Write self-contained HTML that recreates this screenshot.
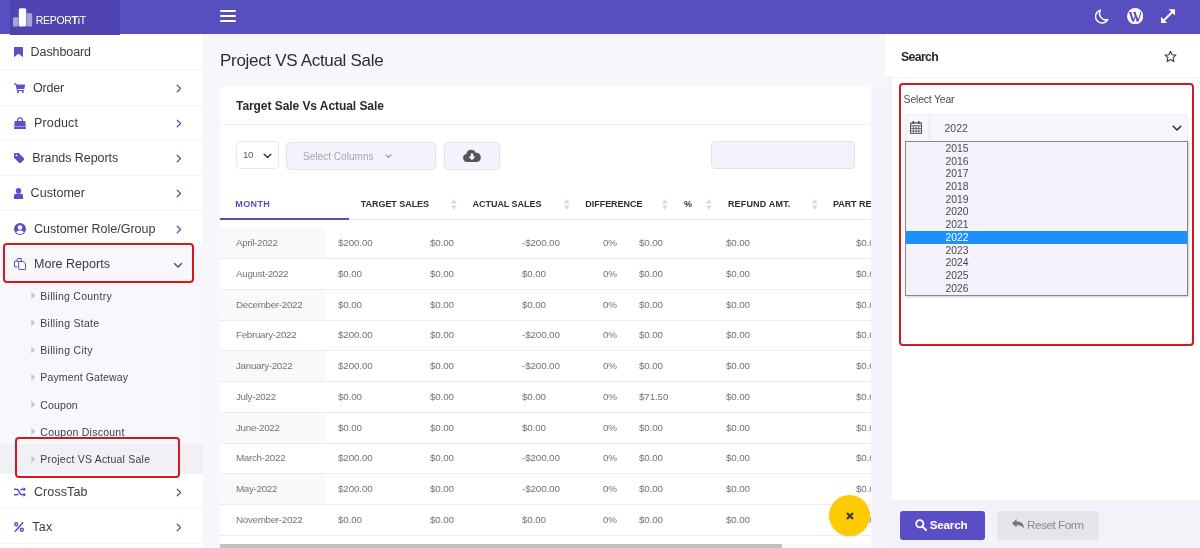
<!DOCTYPE html>
<html lang="en">
<head>
<meta charset="utf-8">
<title>Project VS Actual Sale</title>
<style>
*{box-sizing:border-box;margin:0;padding:0}
html,body{width:1200px;height:548px;overflow:hidden}
body{font-family:"Liberation Sans",sans-serif;background:#f8f6fd;color:#3a3a3c;position:relative;font-size:12px}
.abs{position:absolute}
#app{position:absolute;left:0;top:0;width:1200px;height:548px;overflow:hidden;will-change:transform}
#hdr{position:absolute;left:0;top:0;width:1200px;height:33.6px;background:#574ec0}
#logo{position:absolute;left:10px;top:0;width:110px;height:34.8px;background:#4f44b0;z-index:3}
#logo .txt{position:absolute;left:25.7px;top:12.7px;font-size:10.5px;line-height:14px;color:#fff;white-space:nowrap}
#burger{position:absolute;left:220px;top:10px;width:16px;height:12px}
#burger i{position:absolute;left:0;width:16px;height:2px;background:#fff;border-radius:1px}
#side{position:absolute;left:0;top:0;width:204px;height:548px}
#sidebg{position:absolute;left:0;top:33.6px;width:203.3px;height:515px;background:#fff}
.ln{position:absolute;left:0;width:203.3px;height:1px;background:#f3f2f6}
.mt{position:absolute;line-height:20px;font-size:12.5px;color:#3b3b3d;letter-spacing:.3px;white-space:nowrap}
svg.ic{position:absolute}
svg.ch{position:absolute;left:176px;width:6px;height:9px}
.st{position:absolute;left:40.3px;line-height:16px;font-size:10.5px;color:#3e3e40;letter-spacing:.5px;white-space:nowrap}
.tri{position:absolute;left:31.3px;width:4px;height:7.4px;background:#c8c8ce;clip-path:polygon(0 0,100% 50%,0 100%)}
.red{position:absolute;border:2px solid #d6181d;border-radius:4px}
#title{position:absolute;left:220px;top:49.7px;font-size:17px;line-height:22px;color:#2c2c30;white-space:nowrap}
#card{position:absolute;left:220px;top:87px;width:651px;height:470px;background:#fff;border-radius:5px 1px 0 0;overflow:hidden}
#card h3{position:absolute;left:16px;top:12px;font-size:12px;line-height:14px;font-weight:bold;color:#2a2a2e;letter-spacing:.6px;white-space:nowrap}
.box{position:absolute;border:1px solid #e3e2ec;border-radius:4px;background:#f4f3fc}
.th{position:absolute;top:108.8px;font-size:9px;line-height:16px;font-weight:bold;color:#2e2e32;letter-spacing:.75px;white-space:nowrap}
.th.on{color:#574ec0}
.so{position:absolute;top:111.6px;width:5.6px;height:11px}
.row{position:absolute;left:0;width:651px;height:31px;border-bottom:1px solid #ececf0;font-size:9.8px;letter-spacing:-.12px;color:#72737b;white-space:nowrap}
.row span{position:absolute;top:0;line-height:30px}
.row b{position:absolute;left:0;top:0;width:106px;height:30px;background:#f9f9fb;border-radius:3px}
#panel{position:absolute;left:886px;top:34px;width:314px;height:514px}
.yr{height:12.7px;line-height:13px;font-size:10.4px;color:#4a4a4e;padding-left:40px;white-space:nowrap}
.yr.sel{background:#1e8fff;color:#fff}
.btn{position:absolute;top:477.3px;height:28.5px;border-radius:3px;font-size:11.8px;line-height:28.6px;white-space:nowrap}
</style>
</head>
<body>
<div id="app">
<div id="hdr">
  <div id="logo">
    <svg class="abs" style="left:3px;top:7.5px" width="20" height="19" viewBox="0 0 20 19"><rect x="0" y="9.2" width="5.4" height="9.4" rx="1" fill="#a9a3da"/><rect x="13.6" y="5.2" width="5.6" height="13.4" rx="1" fill="#a9a3da"/><rect x="5.8" y="0.2" width="7.4" height="18.4" rx="1.5" fill="#fff"/></svg>
    <div class="txt" style="letter-spacing:-0.3px">REPOR<b>T</b>iT</div>
  </div>
  <div id="burger"><i style="top:0"></i><i style="top:5px"></i><i style="top:10px"></i></div>
  <svg class="abs" style="left:1095px;top:9px" width="14" height="15" viewBox="0 0 14 15"><path d="M5.5 1.2A6.3 6.3 0 0 0 12.8 10.5 6.5 6.5 0 1 1 5.5 1.2z" fill="none" stroke="#fff" stroke-width="1.5" stroke-linejoin="round"/></svg>
  <svg class="abs" style="left:1126.9px;top:7.9px" width="16.3" height="16.3" viewBox="0 0 16 16"><circle cx="8" cy="8" r="8" fill="#fff"/><path d="M3 4.2 6.2 13.2M7.3 4.2 10.6 13.2" fill="none" stroke="#574ec0" stroke-width="2"/><path d="M6.2 13.4 8.5 7M10.6 13.4 13.2 5.8c.3-.9.1-1.5-.3-2" fill="none" stroke="#574ec0" stroke-width="1.1"/><path d="M1.8 4.3h2.8M6 4.3h2.8" stroke="#574ec0" stroke-width=".8"/></svg>
  <svg class="abs" style="left:1161px;top:8.7px" width="14" height="14.4" viewBox="0 0 14 14"><path d="M3 11 11 3" stroke="#fff" stroke-width="2"/><path d="M7.6 0H14V6.4zM0 7.6 6.4 14H0z" fill="#fff"/></svg>
</div>
<div id="sidebg"></div>
<div id="side">
<div class="abs" style="left:0;top:246px;width:203.3px;height:227px;background:#f8f7fb"></div>
<div class="abs" style="left:0;top:444px;width:203.3px;height:29.5px;background:#f1f0f5"></div>
<div class="ln" style="top:69.4px"></div>
<div class="ln" style="top:104.6px"></div>
<div class="ln" style="top:139.8px"></div>
<div class="ln" style="top:175px"></div>
<div class="ln" style="top:210.2px"></div>
<div class="ln" style="top:245.6px"></div>
<div class="ln" style="top:508px"></div>
<div class="ln" style="top:543.2px"></div>
<svg class="ic" style="left:14px;top:46.5px" width="9" height="10.2" viewBox="0 0 9 11" preserveAspectRatio="none"><path d="M0.6 0h7.8a.6.6 0 0 1 .6.6V11L4.5 7.4 0 11V.6A.6.6 0 0 1 .6 0z" fill="#5b50c6"/></svg>
<div class="mt" style="left:30.6px;top:42px;letter-spacing:-0.09px">Dashboard</div>
<svg class="ic" style="left:14.2px;top:82.5px" width="11.2" height="10.2" viewBox="0 0 12 11"><path d="M0 .3h2.3l.4 1.4H12l-.9 4.9H3.9l.3 1H10.8v1.1H3.3L1.5 1.5H0z" fill="#5b50c6"/><circle cx="4.4" cy="9.8" r="1.1" fill="#5b50c6"/><circle cx="9.4" cy="9.8" r="1.1" fill="#5b50c6"/></svg>
<div class="mt" style="left:33px;top:78px;letter-spacing:-0.21px">Order</div>
<svg class="ch" style="top:84.2px" viewBox="0 0 6 9"><path d="M1.2 1.2 L4.6 4.5 L1.2 7.8" fill="none" stroke="#544f9e" stroke-width="1.2" stroke-linecap="round" stroke-linejoin="round"/></svg>
<svg class="ic" style="left:14px;top:116.5px" width="12" height="12" viewBox="0 0 12 12"><path d="M.7 4h10.6l.7 8H0z" fill="#5b50c6"/><path d="M3.6 5V3.2a2.4 2.4 0 0 1 4.8 0V5" fill="none" stroke="#5b50c6" stroke-width="1.2"/><rect x="0.4" y="9.2" width="11.2" height="0.8" fill="#fff" opacity=".55"/></svg>
<div class="mt" style="left:34px;top:113px;letter-spacing:0.15px">Product</div>
<svg class="ch" style="top:119.2px" viewBox="0 0 6 9"><path d="M1.2 1.2 L4.6 4.5 L1.2 7.8" fill="none" stroke="#544f9e" stroke-width="1.2" stroke-linecap="round" stroke-linejoin="round"/></svg>
<svg class="ic" style="left:14px;top:152.5px" width="10.4" height="10.4" viewBox="0 0 11 11"><path d="M0 .8A.8.8 0 0 1 .8 0h3.8a1 1 0 0 1 .7.3l5.3 5.3a1 1 0 0 1 0 1.4L7 10.6a1 1 0 0 1-1.4 0L.3 5.3A1 1 0 0 1 0 4.6z" fill="#5b50c6"/><circle cx="2.5" cy="2.5" r=".9" fill="#fff"/></svg>
<div class="mt" style="left:32.2px;top:148px;letter-spacing:-0.06px">Brands Reports</div>
<svg class="ch" style="top:154.2px" viewBox="0 0 6 9"><path d="M1.2 1.2 L4.6 4.5 L1.2 7.8" fill="none" stroke="#544f9e" stroke-width="1.2" stroke-linecap="round" stroke-linejoin="round"/></svg>
<svg class="ic" style="left:14px;top:187.5px" width="9" height="11" viewBox="0 0 9 11"><circle cx="4.5" cy="2.7" r="2.7" fill="#5b50c6"/><path d="M0 11V8.3A2.8 2.8 0 0 1 2.8 5.5h3.4A2.8 2.8 0 0 1 9 8.3V11z" fill="#5b50c6"/></svg>
<div class="mt" style="left:30.6px;top:183px;letter-spacing:0.03px">Customer</div>
<svg class="ch" style="top:189.2px" viewBox="0 0 6 9"><path d="M1.2 1.2 L4.6 4.5 L1.2 7.8" fill="none" stroke="#544f9e" stroke-width="1.2" stroke-linecap="round" stroke-linejoin="round"/></svg>
<svg class="ic" style="left:14px;top:223px" width="12" height="12" viewBox="0 0 12 12"><circle cx="6" cy="6" r="6" fill="#5b50c6"/><circle cx="6" cy="4.5" r="2.2" fill="#fff"/><path d="M2.2 9.5C2.8 7.9 4.3 7.5 6 7.5s3.2.4 3.8 2A4.9 4.9 0 0 1 6 11.1 4.9 4.9 0 0 1 2.2 9.5z" fill="#fff"/></svg>
<div class="mt" style="left:34px;top:219px;letter-spacing:-0.01px">Customer Role/Group</div>
<svg class="ch" style="top:225.2px" viewBox="0 0 6 9"><path d="M1.2 1.2 L4.6 4.5 L1.2 7.8" fill="none" stroke="#544f9e" stroke-width="1.2" stroke-linecap="round" stroke-linejoin="round"/></svg>
<svg class="ic" style="left:14px;top:258px" width="12" height="12" viewBox="0 0 12 12"><path d="M3.2 3.2V1.1a.6.6 0 0 1 .6-.6h3.4l0 2.7M4.7 3.2H.5v5.6h3" fill="none" stroke="#5b50c6" stroke-width="1"/><path d="M4.7 3.5h4.6l2.2 2.2v5.2a.6.6 0 0 1-.6.6H5.3a.6.6 0 0 1-.6-.6z" fill="none" stroke="#5b50c6" stroke-width="1"/></svg>
<div class="mt" style="left:34px;top:254px;letter-spacing:0.02px">More Reports</div>
<svg class="abs" style="left:173px;top:262px" width="10" height="7" viewBox="0 0 10 7"><path d="M1.5 1.5 5 5l3.5-3.5" fill="none" stroke="#4a4690" stroke-width="1.4" stroke-linecap="round" stroke-linejoin="round"/></svg>
<svg class="ic" style="left:14px;top:486.8px" width="12" height="10" viewBox="0 0 12 10"><path d="M0 2.2h2.2c1.6 0 2.3 1 3 2.8s1.4 2.8 3 2.8H10M0 7.8h2.2c1 0 1.6-.4 2.1-1.1M6.6 3.3c.5-.7 1-1.1 1.9-1.1H10" fill="none" stroke="#5b50c6" stroke-width="1.5"/><path d="M9.6 0 12 2.2 9.6 4.4zM9.6 5.6 12 7.8 9.6 10z" fill="#5b50c6"/></svg>
<div class="mt" style="left:34px;top:481.8px;letter-spacing:0.09px">CrossTab</div>
<svg class="ch" style="top:488px" viewBox="0 0 6 9"><path d="M1.2 1.2 L4.6 4.5 L1.2 7.8" fill="none" stroke="#544f9e" stroke-width="1.2" stroke-linecap="round" stroke-linejoin="round"/></svg>
<svg class="ic" style="left:14px;top:521.5px" width="10" height="10" viewBox="0 0 10 10"><circle cx="2.2" cy="2.2" r="1.5" fill="none" stroke="#5b50c6" stroke-width="1.4"/><circle cx="7.8" cy="7.8" r="1.5" fill="none" stroke="#5b50c6" stroke-width="1.4"/><path d="M8.7 .8 1.3 9.2" stroke="#5b50c6" stroke-width="1.6" stroke-linecap="round"/></svg>
<div class="mt" style="left:32.2px;top:516.5px;letter-spacing:0.32px">Tax</div>
<svg class="ch" style="top:522.7px" viewBox="0 0 6 9"><path d="M1.2 1.2 L4.6 4.5 L1.2 7.8" fill="none" stroke="#544f9e" stroke-width="1.2" stroke-linecap="round" stroke-linejoin="round"/></svg>
<i class="tri" style="top:291.8px"></i><div class="st" style="top:287.5px;letter-spacing:0.26px">Billing Country</div>
<i class="tri" style="top:319px"></i><div class="st" style="top:314.7px;letter-spacing:0.28px">Billing State</div>
<i class="tri" style="top:346.2px"></i><div class="st" style="top:341.9px;letter-spacing:0.29px">Billing City</div>
<i class="tri" style="top:373.5px"></i><div class="st" style="top:369.2px;letter-spacing:0.14px">Payment Gateway</div>
<i class="tri" style="top:400.8px"></i><div class="st" style="top:396.5px;letter-spacing:0.12px">Coupon</div>
<i class="tri" style="top:427.8px"></i><div class="st" style="top:423.5px;letter-spacing:0.25px">Coupon Discount</div>
<i class="tri" style="top:455.5px"></i><div class="st" style="top:451.2px;letter-spacing:0.22px">Project VS Actual Sale</div>
<div class="red" style="left:3px;top:243px;width:191px;height:40px"></div>
<div class="red" style="left:15px;top:437.2px;width:164.5px;height:40.6px"></div>
</div>
<div id="title" style="letter-spacing:-0.31px">Project VS Actual Sale</div>
<div id="card">
  <h3 style="letter-spacing:-0.06px">Target Sale Vs Actual Sale</h3>
  <div class="abs" style="left:0;top:37px;width:651px;height:1px;background:#f1f0f5"></div>
  <div class="box" style="left:15.6px;top:54px;width:43.2px;height:28px;background:#fff;border-color:#e7e7ec"><span class="abs" style="left:6.3px;top:0;line-height:26.4px;font-size:9.8px;letter-spacing:-.3px;color:#5e5e64">10</span><svg class="abs" style="left:26.4px;top:10.8px" width="9" height="6.3" viewBox="0 0 10 7"><path d="M1.3 1.3 5 5l3.7-3.7" fill="none" stroke="#303034" stroke-width="1.5" stroke-linecap="round" stroke-linejoin="round"/></svg></div>
  <div class="box" style="left:66.2px;top:55px;width:149.8px;height:28px"><span class="abs" style="left:15.8px;top:0;line-height:28px;font-size:10px;color:#a6a6ac;white-space:nowrap;letter-spacing:0.04px">Select Columns</span><svg class="abs" style="left:98px;top:11px" width="7" height="5" viewBox="0 0 7 5"><path d="M1 1 3.5 3.5 6 1" fill="none" stroke="#a0a0a8" stroke-width="1.1" stroke-linecap="round" stroke-linejoin="round"/></svg></div>
  <div class="box" style="left:224px;top:55px;width:56px;height:28px"><svg class="abs" style="left:17.6px;top:6px" width="18" height="13" viewBox="0 0 18 13"><path d="M4.2 13A4.1 4.1 0 0 1 3.3 4.9 5 5 0 0 1 12.8 3.7 4.7 4.7 0 0 1 14 13z" fill="#55555a"/><path d="M9 11.2 5.6 7.6H7.8V4.6h2.4v3h2.2z" fill="#fff"/></svg></div>
  <div class="box" style="left:491px;top:54px;width:144px;height:28px"></div>
  <div class="abs" style="left:0;top:131.5px;width:651px;height:1px;background:#e9e9ee"></div>
  <div class="abs" style="left:0;top:131.4px;width:129.2px;height:1.7px;background:#574ec0"></div>
<div class="th on" style="left:15.25px;letter-spacing:0.38px">MONTH</div>
<div class="th" style="left:140.75px;letter-spacing:-0.05px">TARGET SALES</div>
<div class="th" style="left:252.5px;letter-spacing:-0.03px">ACTUAL SALES</div>
<div class="th" style="left:365.25px;letter-spacing:-0.03px">DIFFERENCE</div>
<div class="th" style="left:464px;letter-spacing:0px">%</div>
<div class="th" style="left:507.9px;letter-spacing:0.18px">REFUND AMT.</div>
<div class="th" style="left:612.9px;letter-spacing:-0.04px">PART RE</div>
<svg class="so" style="left:231px" viewBox="0 0 5.6 11"><path d="M2.8 0 5.6 4.6H0z" fill="#d9d9dd"/><path d="M2.8 11 5.6 6.4H0z" fill="#d9d9dd"/></svg>
<svg class="so" style="left:344px" viewBox="0 0 5.6 11"><path d="M2.8 0 5.6 4.6H0z" fill="#d9d9dd"/><path d="M2.8 11 5.6 6.4H0z" fill="#d9d9dd"/></svg>
<svg class="so" style="left:442.4px" viewBox="0 0 5.6 11"><path d="M2.8 0 5.6 4.6H0z" fill="#d9d9dd"/><path d="M2.8 11 5.6 6.4H0z" fill="#d9d9dd"/></svg>
<svg class="so" style="left:486px" viewBox="0 0 5.6 11"><path d="M2.8 0 5.6 4.6H0z" fill="#d9d9dd"/><path d="M2.8 11 5.6 6.4H0z" fill="#d9d9dd"/></svg>
<svg class="so" style="left:592.2px" viewBox="0 0 5.6 11"><path d="M2.8 0 5.6 4.6H0z" fill="#d9d9dd"/><path d="M2.8 11 5.6 6.4H0z" fill="#d9d9dd"/></svg>
<div class="row" style="top:141px"><b></b><span style="left:16px;letter-spacing:-.3px">April-2022</span><span style="left:118px">$200.00</span><span style="left:210px">$0.00</span><span style="left:302px">-$200.00</span><span style="left:383px">0%</span><span style="left:419px">$0.00</span><span style="left:506px">$0.00</span><span style="left:636px">$0.00</span></div>
<div class="row" style="top:171.75px"><span style="left:16px;letter-spacing:-.3px">August-2022</span><span style="left:118px">$0.00</span><span style="left:210px">$0.00</span><span style="left:302px">$0.00</span><span style="left:383px">0%</span><span style="left:419px">$0.00</span><span style="left:506px">$0.00</span><span style="left:636px">$0.00</span></div>
<div class="row" style="top:202.5px"><b></b><span style="left:16px;letter-spacing:-.3px">December-2022</span><span style="left:118px">$0.00</span><span style="left:210px">$0.00</span><span style="left:302px">$0.00</span><span style="left:383px">0%</span><span style="left:419px">$0.00</span><span style="left:506px">$0.00</span><span style="left:636px">$0.00</span></div>
<div class="row" style="top:233.25px"><span style="left:16px;letter-spacing:-.3px">February-2022</span><span style="left:118px">$200.00</span><span style="left:210px">$0.00</span><span style="left:302px">-$200.00</span><span style="left:383px">0%</span><span style="left:419px">$0.00</span><span style="left:506px">$0.00</span><span style="left:636px">$0.00</span></div>
<div class="row" style="top:264px"><b></b><span style="left:16px;letter-spacing:-.3px">January-2022</span><span style="left:118px">$200.00</span><span style="left:210px">$0.00</span><span style="left:302px">-$200.00</span><span style="left:383px">0%</span><span style="left:419px">$0.00</span><span style="left:506px">$0.00</span><span style="left:636px">$0.00</span></div>
<div class="row" style="top:294.75px"><span style="left:16px;letter-spacing:-.3px">July-2022</span><span style="left:118px">$0.00</span><span style="left:210px">$0.00</span><span style="left:302px">$0.00</span><span style="left:383px">0%</span><span style="left:419px">$71.50</span><span style="left:506px">$0.00</span><span style="left:636px">$0.00</span></div>
<div class="row" style="top:325.5px"><b></b><span style="left:16px;letter-spacing:-.3px">June-2022</span><span style="left:118px">$0.00</span><span style="left:210px">$0.00</span><span style="left:302px">$0.00</span><span style="left:383px">0%</span><span style="left:419px">$0.00</span><span style="left:506px">$0.00</span><span style="left:636px">$0.00</span></div>
<div class="row" style="top:356.25px"><span style="left:16px;letter-spacing:-.3px">March-2022</span><span style="left:118px">$200.00</span><span style="left:210px">$0.00</span><span style="left:302px">-$200.00</span><span style="left:383px">0%</span><span style="left:419px">$0.00</span><span style="left:506px">$0.00</span><span style="left:636px">$0.00</span></div>
<div class="row" style="top:387px"><b></b><span style="left:16px;letter-spacing:-.3px">May-2022</span><span style="left:118px">$200.00</span><span style="left:210px">$0.00</span><span style="left:302px">-$200.00</span><span style="left:383px">0%</span><span style="left:419px">$0.00</span><span style="left:506px">$0.00</span><span style="left:636px">$0.00</span></div>
<div class="row" style="top:417.75px"><span style="left:16px;letter-spacing:-.3px">November-2022</span><span style="left:118px">$0.00</span><span style="left:210px">$0.00</span><span style="left:302px">$0.00</span><span style="left:383px">0%</span><span style="left:419px">$0.00</span><span style="left:506px">$0.00</span><span style="left:636px">$0.00</span></div>
  <div class="abs" style="left:0;top:456.7px;width:651px;height:5px;background:#fafafa"></div>
  <div class="abs" style="left:0;top:456.7px;width:561.7px;height:5px;background:#c1c1c1"></div>
</div>
<div class="abs" style="left:829.3px;top:495.3px;width:41px;height:41px;border-radius:50%;background:#fecb03;box-shadow:0 1px 3px rgba(0,0,0,.1)"><svg class="abs" style="left:16.5px;top:16.5px" width="8" height="8" viewBox="0 0 8 8"><path d="M1 1 7 7M7 1 1 7" stroke="#3b3f4e" stroke-width="2.3"/></svg></div>
<div class="abs" style="left:871px;top:86.5px;width:14px;height:462px;background:#f5f4fb"></div>
<div class="abs" style="left:885px;top:77.5px;width:8px;height:471px;background:#f5f4fa"></div>
<div class="abs" style="left:885px;top:33.6px;width:315px;height:44px;background:#fff"></div>
<div class="abs" style="left:892px;top:77.5px;width:308px;height:471px;background:#fff"></div>
<div id="panel">
  <div class="abs" style="left:15px;top:15px;font-size:12.3px;line-height:16px;font-weight:bold;color:#2a2a2e;letter-spacing:-0.65px">Search</div>
  <svg class="abs" style="left:278px;top:16px" width="13" height="13" viewBox="0 0 13 13"><path d="M6.5 1.2 8.1 4.7 11.9 5.1 9.1 7.7 9.9 11.5 6.5 9.6 3.1 11.5 3.9 7.7 1.1 5.1 4.9 4.7z" fill="none" stroke="#3c3c40" stroke-width="1.1" stroke-linejoin="round"/></svg>
  <div class="abs" style="left:0;top:43px;width:314px;height:1px;background:#f3f2f7"></div>
  <div class="abs" style="left:17.6px;top:57px;font-size:10.5px;line-height:16px;color:#4c4c52;white-space:nowrap;letter-spacing:-0.21px">Select Year</div>
  <div class="abs" style="left:18.5px;top:80px;width:283.5px;height:27.5px;background:#f7f6fd;border:1px solid #eeedf5;border-radius:3px"></div>
  <svg class="abs" style="left:23.6px;top:86.5px" width="12.2" height="13.4" viewBox="0 0 13 13" preserveAspectRatio="none"><rect x=".6" y="1.8" width="11.8" height="10.6" rx="1" fill="none" stroke="#4a4a50" stroke-width="1.1"/><path d="M.6 4.6h11.8M.6 7.2h11.8M.6 9.8h11.8M3.6 4.6v7.8M6.5 4.6v7.8M9.4 4.6v7.8" stroke="#4a4a50" stroke-width=".8"/><path d="M3.6 0v3M9.4 0v3" stroke="#4a4a50" stroke-width="1.6"/></svg>
  <div class="abs" style="left:43px;top:81px;width:1px;height:25px;background:#e6e5ee"></div>
  <div class="abs" style="left:58.5px;top:86px;font-size:10.5px;line-height:16px;color:#4c4c52">2022</div>
  <svg class="abs" style="left:286px;top:91px" width="10" height="7" viewBox="0 0 10 7"><path d="M1.3 1.3 5 5l3.7-3.7" fill="none" stroke="#2e2e32" stroke-width="1.6" stroke-linecap="round" stroke-linejoin="round"/></svg>
  <div class="abs" style="left:18.5px;top:107px;width:283.5px;height:154.5px;background:#f4f3fb;border:1px solid #87878b;box-shadow:1px 1px 2px rgba(0,0,0,.2)"><div class="yr">2015</div><div class="yr">2016</div><div class="yr">2017</div><div class="yr">2018</div><div class="yr">2019</div><div class="yr">2020</div><div class="yr">2021</div><div class="yr sel">2022</div><div class="yr">2023</div><div class="yr">2024</div><div class="yr">2025</div><div class="yr">2026</div></div>
  <div class="red" style="left:13px;top:49px;width:295px;height:263px"></div>
  <div class="abs" style="left:6px;top:466px;width:308px;height:48px;background:#f3f2f9"></div>
  <div class="btn" style="left:13.7px;width:85px;background:#594ec6;color:#fff;font-weight:bold;letter-spacing:-0.27px"><svg class="abs" style="left:15px;top:8.2px" width="12" height="12" viewBox="0 0 12 12"><circle cx="4.8" cy="4.8" r="3.6" fill="none" stroke="#fff" stroke-width="1.8"/><path d="M7.6 7.6 11 11" stroke="#fff" stroke-width="2" stroke-linecap="round"/></svg><span class="abs" style="left:30px;top:0">Search</span></div>
  <div class="btn" style="left:111px;width:102.2px;background:#e5e5e9;color:#88888e;letter-spacing:-0.51px"><svg class="abs" style="left:15px;top:8.2px" width="12" height="11" viewBox="0 0 12 11"><path d="M0 4.2 4.6 0v2.6c4.2 0 7.4 1.6 7.4 7.4-1.4-3-3.4-3.8-7.4-3.8v2.4z" fill="#77777e"/></svg><span class="abs" style="left:30px;top:0">Reset Form</span></div>
</div>
</div>
</body>
</html>
